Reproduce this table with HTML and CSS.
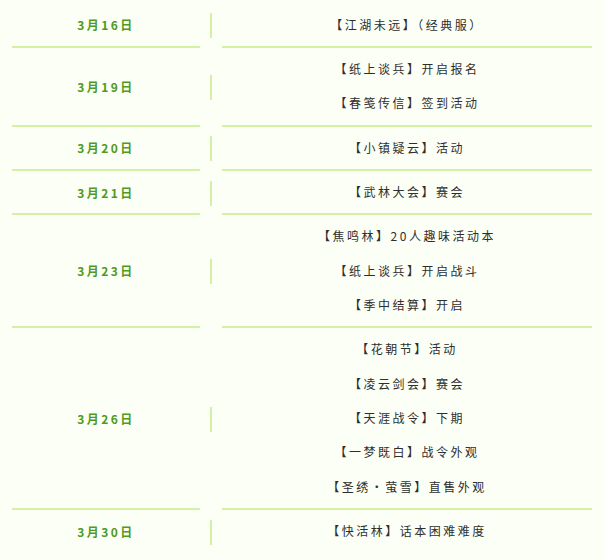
FILE: index.html
```html
<!DOCTYPE html>
<html lang="zh-CN">
<head>
<meta charset="utf-8">
<link rel="stylesheet" href="styles.css">
</head>
<body>
<div class="schedule">
  <div class="row">
    <div class="date">3月16日</div>
    <div class="sep"><span></span></div>
    <div class="events"><div class="ev">【江湖未远】（经典服）</div></div>
  </div>
  <div class="row">
    <div class="date">3月19日</div>
    <div class="sep"><span></span></div>
    <div class="events">
      <div class="ev">【纸上谈兵】开启报名</div>
      <div class="ev">【春笺传信】签到活动</div>
    </div>
  </div>
  <div class="row">
    <div class="date">3月20日</div>
    <div class="sep"><span></span></div>
    <div class="events"><div class="ev">【小镇疑云】活动</div></div>
  </div>
  <div class="row">
    <div class="date">3月21日</div>
    <div class="sep"><span></span></div>
    <div class="events"><div class="ev">【武林大会】赛会</div></div>
  </div>
  <div class="row">
    <div class="date">3月23日</div>
    <div class="sep"><span></span></div>
    <div class="events">
      <div class="ev">【焦鸣林】20人趣味活动本</div>
      <div class="ev">【纸上谈兵】开启战斗</div>
      <div class="ev">【季中结算】开启</div>
    </div>
  </div>
  <div class="row">
    <div class="date">3月26日</div>
    <div class="sep"><span></span></div>
    <div class="events">
      <div class="ev">【花朝节】活动</div>
      <div class="ev">【凌云剑会】赛会</div>
      <div class="ev">【天涯战令】下期</div>
      <div class="ev">【一梦既白】战令外观</div>
      <div class="ev">【圣绣·萤雪】直售外观</div>
    </div>
  </div>
  <div class="row last">
    <div class="date">3月30日</div>
    <div class="sep"><span></span></div>
    <div class="events"><div class="ev">【快活林】话本困难难度</div></div>
  </div>
</div>
</body>
</html>
```
FILE: styles.css
```css
html, body {
  margin: 0;
  padding: 0;
  background: #fbfff5;
}
body {
  font-family: "Noto Sans CJK SC", "Noto Sans", sans-serif;
  font-size: 12px;
  color: #2e2e2e;
}
.schedule {
  padding: 3.5px 13px 0 12px;
}
.row {
  display: flex;
  align-items: stretch;
}
.date {
  width: 188px;
  border-bottom: 2px solid #d3f1a6;
  display: flex;
  align-items: center;
  justify-content: center;
  font-weight: bold;
  color: #4f9a20;
  letter-spacing: 2.5px;
}
.sep {
  width: 22px;
  display: flex;
  align-items: center;
  justify-content: center;
}
.sep span {
  display: block;
  width: 2px;
  height: 25px;
  background: #d3f1a6;
}
.events {
  flex: 1;
  border-bottom: 2px solid #d3f1a6;
  padding: 4px 0;
  text-align: center;
}
.row.last .date,
.row.last .events {
  border-bottom-color: transparent;
}
.ev {
  line-height: 34.35px;
  letter-spacing: 2.5px;
}
```
